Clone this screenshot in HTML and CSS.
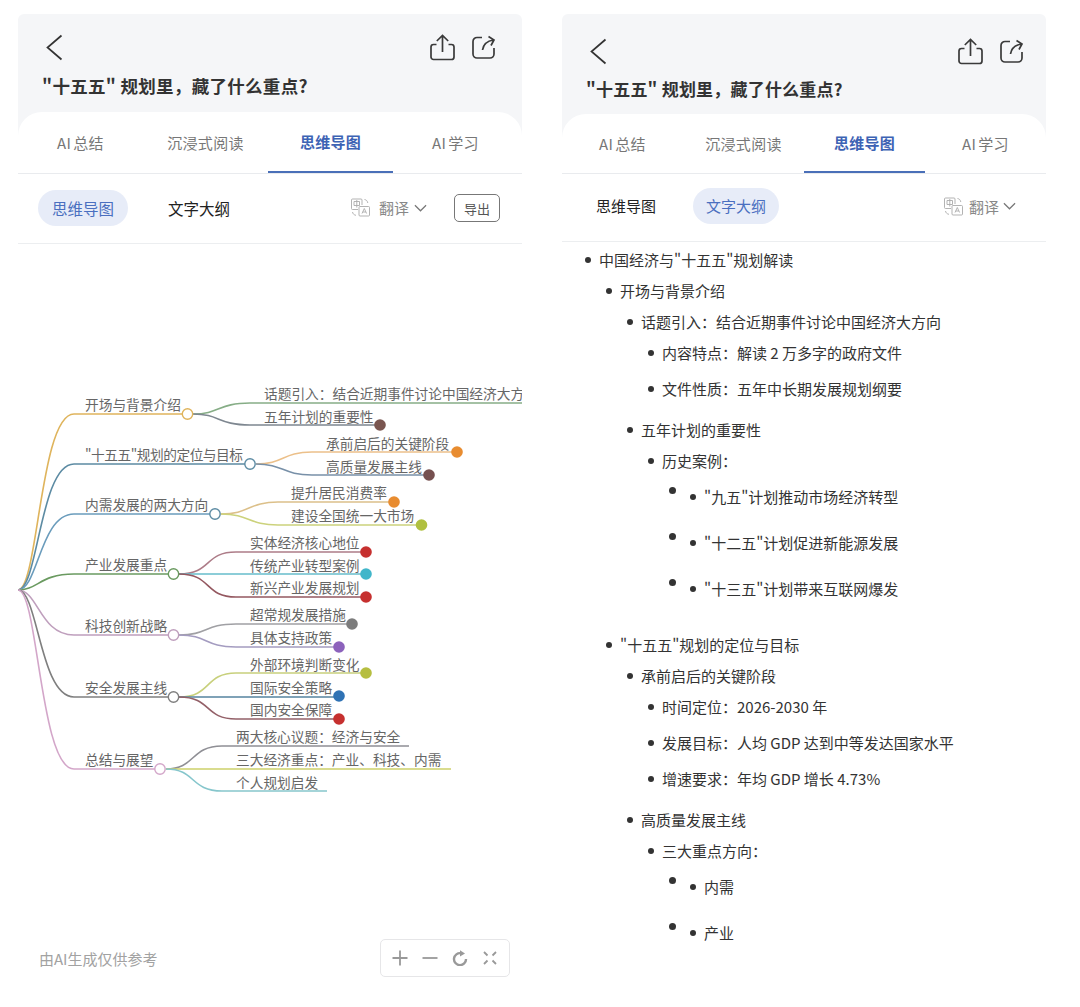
FILE: index.html
```html
<!DOCTYPE html>
<html lang="zh-CN">
<head>
    <meta charset="UTF-8">
    <meta name="viewport" content="width=device-width, initial-scale=1.0">
    <title>思维导图</title>
    <link rel="stylesheet" href="styles.css">
</head>
<body>
    <div class="page">

        <!-- left: mind map -->
        <section class="panel panel-map">
            <header class="head">
                <div class="topbar">
                    <svg class="back" viewBox="0 0 17 27"><path d="M15.5 1.5 1.5 13.5l14 12"/></svg>
                    <div class="actions">
                        <svg class="action" viewBox="0 0 25 27"><path d="M6.5 10.5H3.5a2.5 2.5 0 0 0-2.5 2.500v10a2.500 2.500 0 0 0 2.500 2.500h18a2.500 2.500 0 0 0 2.500-2.500V13a2.500 2.500 0 0 0-2.500-2.500h-3M12.500 18V1.500M6.800 7l5.700-5.500L18.200 7"/></svg>
                        <svg class="action" viewBox="0 0 25 25"><path d="M11 2.500H6a4 4 0 0 0-4 4v12.500a4 4 0 0 0 4 4h13a4 4 0 0 0 4-4v-6M11.500 15c.8-5.500 4.500-9 11-10M17.500 1.500l5.500 3.500-3 5.500"/></svg>
                    </div>
                </div>
                <h1 class="title">"十五五" 规划里，藏了什么重点?</h1>
            </header>
            <div class="sheet">
                <nav class="tabs">
                    <a class="tab">AI 总结</a>
                    <a class="tab">沉浸式阅读</a>
                    <a class="tab active">思维导图</a>
                    <a class="tab">AI 学习</a>
                </nav>
                <div class="subbar">
                    <a class="sub current">思维导图</a>
                    <a class="sub">文字大纲</a>
                    <div class="translate">
                        <svg class="tr-icon" viewBox="0 0 19 19"><path d="M1.500 1h8.500a1 1 0 0 1 1 1v5M7 11.500H1.500a1 1 0 0 1-1-1V2a1 1 0 0 1 1-1M3 3.500h5.500v4H3zM5.800 2v7.500M9 8.500h8.500a1 1 0 0 1 1 1V17a1 1 0 0 1-1 1H9a1 1 0 0 1-1-1V9.500a1 1 0 0 1 1-1zM11 15.500l2.300-5 2.300 5M11.800 14h3M13.500 1.500c1.800.3 3 1.500 3.300 3.500M1.500 14c.3 1.800 1.500 3 3.500 3.300"/></svg>
                        <span>翻译</span>
                        <svg class="chev" viewBox="0 0 14 8"><path d="M1 1l6 6 6-6"/></svg>
                    </div>
                    <button class="export">导出</button>
                </div>

                <svg class="mindmap" viewBox="18 244 504 690" width="504" height="690">
                    <g class="links">
                        <path stroke="#dfb45c" d="M18 590C38 590 40 414 74 414H182"/>
                        <path stroke="#5c8ba3" d="M18 590C38 590 40 464 74 464H245"/>
                        <path stroke="#6a9cbc" d="M18 590C38 590 40 514 74 514H210"/>
                        <path stroke="#6a9a60" d="M18 590C38 590 40 574 74 574H168"/>
                        <path stroke="#bf9fbd" d="M18 590C38 590 40 635 74 635H168"/>
                        <path stroke="#7f7f7f" d="M18 590C38 590 40 697 74 697H168"/>
                        <path stroke="#d3a6c9" d="M18 590C38 590 40 769 74 769H155"/>

                        <path stroke="#86ad86" d="M193 414C220 414 218 403 250 403H522"/>
                        <path stroke="#7e8790" d="M193 414C220 414 218 425 250 425H375"/>
                        <path stroke="#ecc08a" d="M256 464C284 464 282 452 312 452H452"/>
                        <path stroke="#7890a8" d="M256 464C284 464 282 475 312 475H424"/>
                        <path stroke="#dcc08a" d="M221 514C250 514 248 502 278 502H389"/>
                        <path stroke="#ccd27c" d="M221 514C250 514 248 525 278 525H416"/>
                        <path stroke="#ad7c88" d="M179 574C212 574 204 552 236 552H361"/>
                        <path stroke="#66bccb" d="M179 574H361"/>
                        <path stroke="#945860" d="M179 574C212 574 204 597 236 597H361"/>
                        <path stroke="#a0a0a4" d="M179 635C208 635 204 624 236 624H347"/>
                        <path stroke="#a49cc0" d="M179 635C208 635 204 647 236 647H334"/>
                        <path stroke="#c8d07c" d="M179 697C212 697 204 673 236 673H361"/>
                        <path stroke="#55839f" d="M179 697H334"/>
                        <path stroke="#936068" d="M179 697C212 697 204 719 236 719H334"/>
                        <path stroke="#8f8f95" d="M166 769C196 769 190 746 222 746H409"/>
                        <path stroke="#cdd16a" d="M166 769H451"/>
                        <path stroke="#86c6cc" d="M166 769C196 769 190 791 222 791H327"/>
                    </g>

                    <g class="nodes">
                        <circle class="node" stroke="#dfb45c" cx="187.500" cy="414" r="5.200"/>
                        <circle class="node" stroke="#5c8ba3" cx="250" cy="464" r="5.200"/>
                        <circle class="node" stroke="#5c8ba3" cx="215" cy="514" r="5.200"/>
                        <circle class="node" stroke="#6a9a60" cx="173.500" cy="574" r="5.200"/>
                        <circle class="node" stroke="#bf9fbd" cx="173.500" cy="635" r="5.200"/>
                        <circle class="node" stroke="#7f7f7f" cx="173.500" cy="697" r="5.200"/>
                        <circle class="node" stroke="#d3a6c9" cx="160" cy="769" r="5.200"/>

                        <circle fill="#7a5650" cx="380" cy="425" r="5.800"/>
                        <circle fill="#e88c30" cx="457" cy="452" r="5.800"/>
                        <circle fill="#76504f" cx="429" cy="475" r="5.800"/>
                        <circle fill="#e88c30" cx="394" cy="502" r="5.800"/>
                        <circle fill="#b0c040" cx="421.500" cy="525" r="5.800"/>
                        <circle fill="#c6302f" cx="366" cy="552" r="5.800"/>
                        <circle fill="#40b6ca" cx="366" cy="574" r="5.800"/>
                        <circle fill="#c6302f" cx="366" cy="597" r="5.800"/>
                        <circle fill="#7c7c7c" cx="352" cy="624" r="5.800"/>
                        <circle fill="#8c62bc" cx="339" cy="647" r="5.800"/>
                        <circle fill="#b6be40" cx="366" cy="673" r="5.800"/>
                        <circle fill="#2f72b4" cx="339" cy="696" r="5.800"/>
                        <circle fill="#c6302f" cx="339" cy="719" r="5.800"/>
                    </g>

                    <g class="labels">
                        <text x="85" y="410">开场与背景介绍</text>
                        <text x="85" y="460" textLength="158">"十五五"规划的定位与目标</text>
                        <text x="85" y="510">内需发展的两大方向</text>
                        <text x="85" y="570">产业发展重点</text>
                        <text x="85" y="631">科技创新战略</text>
                        <text x="85" y="693">安全发展主线</text>
                        <text x="85" y="765">总结与展望</text>

                        <text x="264" y="399">话题引入：结合近期事件讨论中国经济大方向</text>
                        <text x="264" y="422">五年计划的重要性</text>
                        <text x="326" y="449">承前启后的关键阶段</text>
                        <text x="326" y="472">高质量发展主线</text>
                        <text x="291" y="498">提升居民消费率</text>
                        <text x="291" y="521">建设全国统一大市场</text>
                        <text x="250" y="548">实体经济核心地位</text>
                        <text x="250" y="571">传统产业转型案例</text>
                        <text x="250" y="593">新兴产业发展规划</text>
                        <text x="250" y="620">超常规发展措施</text>
                        <text x="250" y="643">具体支持政策</text>
                        <text x="250" y="670">外部环境判断变化</text>
                        <text x="250" y="693">国际安全策略</text>
                        <text x="250" y="715">国内安全保障</text>
                        <text x="236" y="742">两大核心议题：经济与安全</text>
                        <text x="236" y="765">三大经济重点：产业、科技、内需</text>
                        <text x="236" y="788">个人规划启发</text>
                    </g>
                </svg>

                <footer class="map-foot">
                    <span class="note">由AI生成仅供参考</span>
                    <div class="zoombox">
                        <svg class="zoom-icon" viewBox="0 0 16 16"><path d="M8 .5v15M.5 8h15"/></svg>
                        <svg class="zoom-icon" viewBox="0 0 16 16"><path d="M.5 8h15"/></svg>
                        <svg class="zoom-icon" viewBox="0 0 16 16"><path class="thick" d="M9 3.200A6 6 0 1 0 14 9"/><path class="solid" d="M8 .2l5 3.300-5 3z"/></svg>
                        <svg class="zoom-icon" viewBox="0 0 16 16"><path d="M2 2l3.500 3.500M14 2l-3.500 3.500M2 14l3.500-3.500M14 14l-3.500-3.500"/></svg>
                    </div>
                </footer>
            </div>
        </section>

        <!-- right: text outline -->
        <section class="panel panel-outline">
            <header class="head">
                <div class="topbar">
                    <svg class="back" viewBox="0 0 17 27"><path d="M15.5 1.5 1.5 13.5l14 12"/></svg>
                    <div class="actions">
                        <svg class="action" viewBox="0 0 25 27"><path d="M6.5 10.5H3.5a2.5 2.5 0 0 0-2.5 2.500v10a2.500 2.500 0 0 0 2.500 2.500h18a2.500 2.500 0 0 0 2.500-2.500V13a2.500 2.500 0 0 0-2.500-2.500h-3M12.500 18V1.500M6.800 7l5.700-5.500L18.200 7"/></svg>
                        <svg class="action" viewBox="0 0 25 25"><path d="M11 2.500H6a4 4 0 0 0-4 4v12.500a4 4 0 0 0 4 4h13a4 4 0 0 0 4-4v-6M11.500 15c.8-5.500 4.500-9 11-10M17.500 1.500l5.500 3.500-3 5.500"/></svg>
                    </div>
                </div>
                <h1 class="title">"十五五" 规划里，藏了什么重点?</h1>
            </header>
            <div class="sheet">
                <nav class="tabs">
                    <a class="tab">AI 总结</a>
                    <a class="tab">沉浸式阅读</a>
                    <a class="tab active">思维导图</a>
                    <a class="tab">AI 学习</a>
                </nav>
                <div class="subbar">
                    <a class="sub">思维导图</a>
                    <a class="sub current">文字大纲</a>
                    <div class="translate">
                        <svg class="tr-icon" viewBox="0 0 19 19"><path d="M1.500 1h8.500a1 1 0 0 1 1 1v5M7 11.500H1.500a1 1 0 0 1-1-1V2a1 1 0 0 1 1-1M3 3.500h5.500v4H3zM5.800 2v7.500M9 8.500h8.500a1 1 0 0 1 1 1V17a1 1 0 0 1-1 1H9a1 1 0 0 1-1-1V9.500a1 1 0 0 1 1-1zM11 15.500l2.300-5 2.300 5M11.800 14h3M13.500 1.500c1.800.3 3 1.500 3.300 3.500M1.500 14c.3 1.800 1.500 3 3.500 3.300"/></svg>
                        <span>翻译</span>
                        <svg class="chev" viewBox="0 0 14 8"><path d="M1 1l6 6 6-6"/></svg>
                    </div>
                </div>

                <ul class="outline">
                    <li><span>中国经济与"十五五"规划解读</span>
                        <ul>
                            <li><span>开场与背景介绍</span>
                                <ul>
                                    <li><span>话题引入：结合近期事件讨论中国经济大方向</span>
                                        <ul class="leaves">
                                            <li><span>内容特点：解读 2 万多字的政府文件</span></li>
                                            <li><span>文件性质：五年中长期发展规划纲要</span></li>
                                        </ul>
                                    </li>
                                    <li><span>五年计划的重要性</span>
                                        <ul>
                                            <li><span>历史案例：</span>
                                                <ul class="doubles">
                                                    <li><span>"九五"计划推动市场经济转型</span></li>
                                                    <li><span>"十二五"计划促进新能源发展</span></li>
                                                    <li><span>"十三五"计划带来互联网爆发</span></li>
                                                </ul>
                                            </li>
                                        </ul>
                                    </li>
                                </ul>
                            </li>
                            <li><span>"十五五"规划的定位与目标</span>
                                <ul>
                                    <li><span>承前启后的关键阶段</span>
                                        <ul class="leaves">
                                            <li><span>时间定位：2026-2030 年</span></li>
                                            <li><span>发展目标：人均 GDP 达到中等发达国家水平</span></li>
                                            <li><span>增速要求：年均 GDP 增长 4.73%</span></li>
                                        </ul>
                                    </li>
                                    <li><span>高质量发展主线</span>
                                        <ul>
                                            <li><span>三大重点方向：</span>
                                                <ul class="doubles">
                                                    <li><span>内需</span></li>
                                                    <li><span>产业</span></li>
                                                </ul>
                                            </li>
                                        </ul>
                                    </li>
                                </ul>
                            </li>
                        </ul>
                    </li>
                </ul>
            </div>
        </section>
    </div>
</body>
</html>
```

FILE: styles.css
```css
* {
    box-sizing: border-box;
}
body {
    margin: 0;
    background-color: #fff;
    color: #333;
    font-family: "Noto Sans CJK SC", "Noto Sans", sans-serif;
}
.page {
    display: flex;
    gap: 40px;
    height: 1007px;
    padding: 14px 0 0 18px;
    overflow: hidden;
}
.panel {
    display: flex;
    flex-direction: column;
    background-color: #f5f6f8;
    border-radius: 6px 6px 0 0;
}
.panel-map {
    width: 504px;
}
.panel-outline {
    width: 484px;
}

/* grey header */
.head {
    flex: none;
    padding: 20px 24px 0;
}
.panel-map .head {
    height: 98px;
}
.panel-outline .head {
    height: 100px;
    padding: 24px 24px 0;
}
.topbar {
    display: flex;
    justify-content: space-between;
    align-items: center;
    height: 26px;
}
.back {
    width: 17px;
    height: 27px;
    margin-left: 4px;
    fill: none;
    stroke: #333;
    stroke-width: 1.7;
}
.actions {
    display: flex;
    align-items: center;
    gap: 16px;
}
.panel-map .actions {
    margin-right: 2px;
}
.panel-outline .actions {
    margin-right: -2px;
}
.action {
    width: 25px;
    height: 27px;
    fill: none;
    stroke: #3a3a3a;
    stroke-width: 1.7;
}
.title {
    margin: 13px 0 0;
    font-size: 17.500px;
    font-weight: 700;
    line-height: 26px;
    letter-spacing: 0.3px;
    color: #333;
    white-space: nowrap;
}
.panel-outline .title {
    margin-top: 12px;
    font-size: 17px;
    letter-spacing: 0.2px;
}

/* white sheet */
.sheet {
    flex: 1;
    display: flex;
    flex-direction: column;
    background-color: #fff;
    border-radius: 24px 24px 0 0;
}
.tabs {
    display: grid;
    grid-template-columns: repeat(4, 1fr);
    flex: none;
    border-bottom: 1px solid #e9ebee;
}
.panel-map .tabs {
    height: 62px;
    padding-right: 4px;
}
.panel-outline .tabs {
    height: 60px;
}
.tab {
    display: flex;
    align-items: center;
    justify-content: center;
    font-size: 15px;
    letter-spacing: 0.3px;
    word-spacing: -1.500px;
    color: #777;
}
.tab.active {
    font-weight: 700;
    color: #3d63b4;
    border-bottom: 2px solid #4a6fb8;
}

/* sub bar */
.subbar {
    display: flex;
    align-items: center;
    flex: none;
    border-bottom: 1px solid #eceef0;
}
.panel-map .subbar {
    gap: 27px;
    height: 70px;
    padding: 0 22px 2px 20px;
    font-size: 15.500px;
}
.panel-outline .subbar {
    gap: 24px;
    height: 68px;
    padding: 0 30px 3px 21px;
    font-size: 15px;
}
.sub {
    padding: 0 13px;
    line-height: 36px;
    border-radius: 18px;
    color: #222;
    white-space: nowrap;
}
.panel-map .sub.current {
    padding: 0 14px;
}
.sub.current {
    background-color: #e7ecf8;
    color: #4a6fc0;
}
.translate {
    display: flex;
    align-items: center;
    margin-left: auto;
    font-size: 15px;
    color: #888;
}
.tr-icon {
    width: 19px;
    height: 19px;
    margin-right: 9px;
    fill: none;
    stroke: #aaa;
    stroke-width: 0.9;
}
.panel-outline .tr-icon {
    margin-right: 6px;
}
.chev {
    width: 13px;
    height: 8px;
    margin-left: 5px;
    fill: none;
    stroke: #777;
    stroke-width: 1.3;
}
.panel-outline .chev {
    margin-left: 4px;
}
.export {
    width: 46px;
    height: 28px;
    margin: 1px 0 0;
    padding: 0;
    background: #fff;
    border: 1.4px solid #777;
    border-radius: 5px;
    font-family: inherit;
    font-size: 13px;
    color: #555;
}

/* mind map */
.mindmap {
    display: block;
    flex: none;
}
.links path {
    fill: none;
    stroke-width: 1.6;
}
.node {
    fill: #fff;
    stroke-width: 1.4;
}
.labels text {
    font-size: 13.700px;
    fill: #666;
}
.map-foot {
    display: flex;
    align-items: center;
    justify-content: space-between;
    padding: 5px 12px 0 21px;
}
.note {
    font-size: 15px;
    color: #a2a2a2;
}
.zoombox {
    display: flex;
    align-items: center;
    justify-content: space-between;
    width: 130px;
    height: 38px;
    padding: 0 11px;
    border: 1.4px solid #e6e6e8;
    border-radius: 5px;
}
.zoom-icon {
    width: 16px;
    height: 16px;
    fill: none;
    stroke: #999;
    stroke-width: 1.800;
}
.zoom-icon .thick {
    stroke-width: 2.400;
}
.zoom-icon .solid {
    fill: #999;
    stroke: none;
}

/* text outline */
.outline,
.outline ul {
    margin: 0;
    list-style: none;
}
.outline {
    padding: 7px 0 0 37px;
    font-size: 15px;
    color: #333;
}
.outline ul {
    padding: 0 0 0 21px;
}
.outline li {
    margin-top: 9px;
}
.outline li:first-child {
    margin-top: 0;
}
.outline ul > li:first-child {
    margin-top: 9px;
}
.outline span {
    position: relative;
    display: block;
    line-height: 22px;
    white-space: nowrap;
}
.outline span::before {
    content: "";
    position: absolute;
    left: -14px;
    top: 8px;
    width: 6px;
    height: 6px;
    border-radius: 50%;
    background-color: #333;
}
.outline ul.leaves {
    padding-bottom: 10px;
}
.outline ul.leaves > li {
    margin-top: 14px;
}
.outline ul.leaves > li:first-child {
    margin-top: 9px;
}
.outline ul.doubles {
    padding: 0 0 25px 42px;
}
.outline ul.doubles > li {
    margin-top: 24px;
}
.outline ul.doubles > li:first-child {
    margin-top: 14px;
}
.outline ul.doubles span::after {
    content: "";
    position: absolute;
    left: -35px;
    top: 1px;
    width: 7px;
    height: 7px;
    border-radius: 50%;
    background-color: #333;
}
```
